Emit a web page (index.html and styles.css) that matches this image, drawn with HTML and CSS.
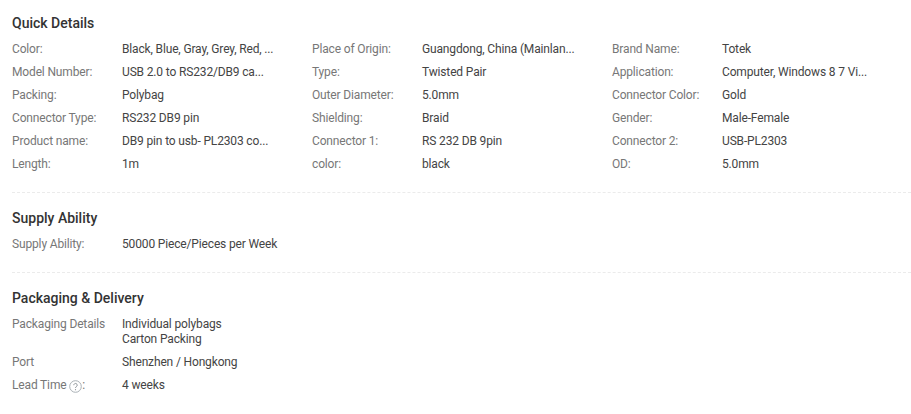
FILE: index.html
```html
<!DOCTYPE html>
<html lang="en">
<head>
<meta charset="utf-8">
<title>Product details</title>
<link rel="stylesheet" href="styles.css">
</head>
<body>
<main class="page">
  <section class="section">
    <h3 class="title">Quick Details</h3>
    <div class="grid">
      <div class="row"><span class="label">Color:</span><span class="value">Black, Blue, Gray, Grey, Red, ...</span></div>
      <div class="row"><span class="label">Place of Origin:</span><span class="value">Guangdong, China (Mainlan...</span></div>
      <div class="row"><span class="label">Brand Name:</span><span class="value">Totek</span></div>
      <div class="row"><span class="label">Model Number:</span><span class="value">USB 2.0 to RS232/DB9 ca...</span></div>
      <div class="row"><span class="label">Type:</span><span class="value">Twisted Pair</span></div>
      <div class="row"><span class="label">Application:</span><span class="value">Computer, Windows 8 7 Vi...</span></div>
      <div class="row"><span class="label">Packing:</span><span class="value">Polybag</span></div>
      <div class="row"><span class="label">Outer Diameter:</span><span class="value">5.0mm</span></div>
      <div class="row"><span class="label">Connector Color:</span><span class="value">Gold</span></div>
      <div class="row"><span class="label">Connector Type:</span><span class="value">RS232 DB9 pin</span></div>
      <div class="row"><span class="label">Shielding:</span><span class="value">Braid</span></div>
      <div class="row"><span class="label">Gender:</span><span class="value">Male-Female</span></div>
      <div class="row"><span class="label">Product name:</span><span class="value">DB9 pin to usb- PL2303 co...</span></div>
      <div class="row"><span class="label">Connector 1:</span><span class="value">RS 232 DB 9pin</span></div>
      <div class="row"><span class="label">Connector 2:</span><span class="value">USB-PL2303</span></div>
      <div class="row"><span class="label">Length:</span><span class="value">1m</span></div>
      <div class="row"><span class="label">color:</span><span class="value">black</span></div>
      <div class="row"><span class="label">OD:</span><span class="value">5.0mm</span></div>
    </div>
  </section>
  <section class="section">
    <h3 class="title">Supply Ability</h3>
    <div class="row"><span class="label">Supply Ability:</span><span class="value">50000 Piece/Pieces per Week</span></div>
  </section>
  <section class="section last">
    <h3 class="title">Packaging &amp; Delivery</h3>
    <div class="row"><span class="label">Packaging Details</span><span class="value">Individual polybags<br>Carton Packing</span></div>
    <div class="row"><span class="label">Port</span><span class="value">Shenzhen / Hongkong</span></div>
    <div class="row"><span class="label">Lead Time <svg class="help" width="13" height="13" viewBox="0 0 13 13" aria-hidden="true"><circle cx="6.5" cy="6.5" r="5.8" fill="none" stroke="#a9b0b5" stroke-width="1"/><path d="M4.8 5.2a1.7 1.7 0 1 1 2.6 1.4c-.6.4-.9.7-.9 1.4" fill="none" stroke="#8d9499" stroke-width="1"/><circle cx="6.5" cy="9.7" r=".6" fill="#8d9499"/></svg>:</span><span class="value">4 weeks</span></div>
  </section>
</main>
</body>
</html>
```
FILE: styles.css
```css
* { box-sizing: border-box; }
html, body { margin: 0; background: #fff; }
body { font: 12px/15px Roboto, "Liberation Sans", sans-serif; color: #333; letter-spacing: -0.15px; }
.page { padding: 0 0 0 12px; }
.section { padding: 15px 0 16px; border-bottom: 1px dashed #ebebeb; }
.section + .section { padding-top: 17px; }
.section.last { border-bottom: 0; }
.title { margin: 0 0 7px; font-size: 14px; line-height: 16px; font-weight: 500; color: #333; letter-spacing: 0; }
.grid { display: grid; grid-template-columns: repeat(3, 300px); }
.row { display: flex; padding: 4px 0; }
.label { width: 110px; flex: none; color: #777; }
.value { color: #444; }
.help { vertical-align: -4px; }
```
